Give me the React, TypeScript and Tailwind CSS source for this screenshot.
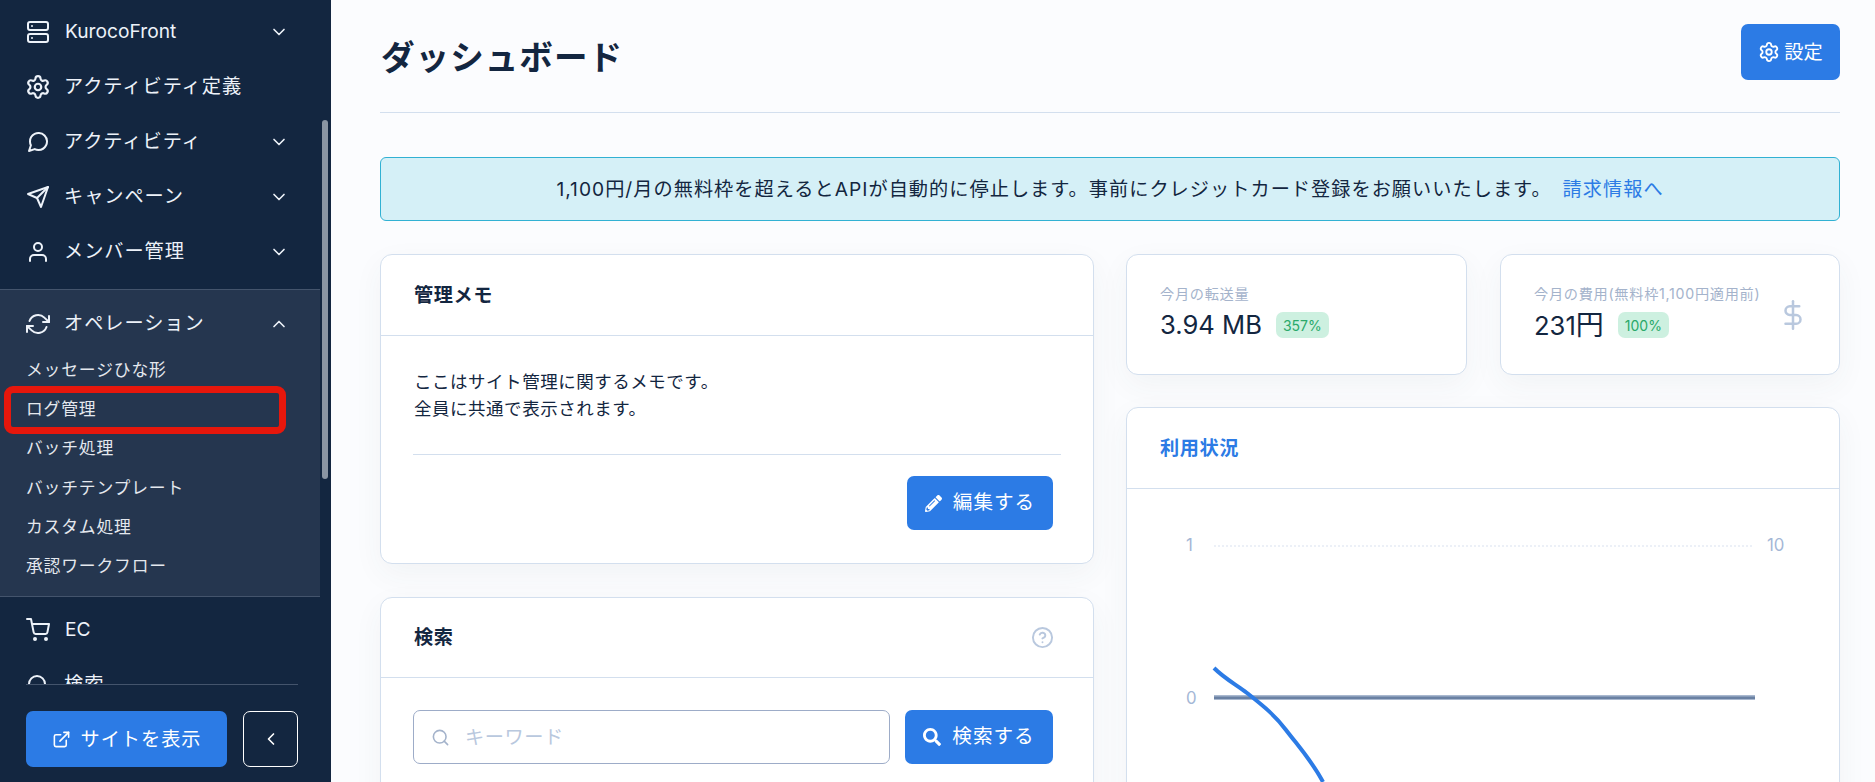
import React from 'react';
import {
  FiServer,
  FiMessageCircle,
  FiSend,
  FiUser,
  FiRefreshCw,
  FiShoppingCart,
  FiSearch,
  FiExternalLink,
  FiChevronDown,
  FiChevronUp,
  FiChevronLeft,
  FiHelpCircle,
  FiDollarSign,
} from 'react-icons/fi';
import { FaPencilAlt, FaSearch } from 'react-icons/fa';
import { Settings } from 'lucide-react';

const font = '[font-family:Inter,"Noto_Sans_CJK_JP",sans-serif]';

const NavRow = ({ icon, label, chevron, latin }: { icon: React.ReactNode; label: string; chevron?: 'down' | 'up'; latin?: boolean }) => (
  <div className="flex h-[55px] items-center pl-[26px] pr-[31px] text-[#edf2f9]">
    <span className="flex w-[39px] shrink-0 items-center text-[24px]">{icon}</span>
    <span className={`flex-1 text-[19.2px] ${latin ? 'tracking-normal' : '-ml-[1px] tracking-[0.05em]'}`}>{label}</span>
    {chevron === 'down' && <FiChevronDown className="text-[20px]" />}
    {chevron === 'up' && <FiChevronUp className="text-[20px]" />}
  </div>
);

const subItems = ['メッセージひな形', 'ログ管理', 'バッチ処理', 'バッチテンプレート', 'カスタム処理', '承認ワークフロー'];

const Sidebar = () => (
  <aside className="relative flex h-full w-[331px] shrink-0 flex-col bg-[#132640]">
    <div className="h-[684px] shrink-0 overflow-hidden pt-[4px]">
      <div className="w-[320px]">
        <NavRow icon={<FiServer />} label="KurocoFront" chevron="down" latin />
        <NavRow icon={<Settings size={26} strokeWidth={2} className="-ml-[1px]" />} label="アクティビティ定義" />
        <NavRow icon={<FiMessageCircle />} label="アクティビティ" chevron="down" />
        <NavRow icon={<FiSend />} label="キャンペーン" chevron="down" />
        <NavRow icon={<FiUser />} label="メンバー管理" chevron="down" />
        <div className="mt-[10px] border-y border-[#44546c] bg-[#25364f] pb-[10px] pt-[6px]">
          <NavRow icon={<FiRefreshCw />} label="オペレーション" chevron="up" />
          {subItems.map((item) => (
            <div key={item} className="flex h-[39.2px] items-center pl-[26px] text-[16.8px] tracking-[0.05em] text-[#e4e8ee]">
              {item}
            </div>
          ))}
        </div>
        <div className="mt-[5px]">
          <NavRow icon={<FiShoppingCart />} label="EC" latin />
          <NavRow icon={<FiSearch />} label="検索" />
        </div>
      </div>
    </div>
    <div className="ml-[26px] mr-[33px] flex gap-[16px] border-t border-[#44546c] pt-[26px]">
      <button className="flex h-[56px] w-[201px] shrink-0 items-center justify-center gap-[10px] rounded-[7px] bg-[#2c7be5] text-[19.2px] tracking-[0.05em] text-white">
        <FiExternalLink className="text-[19px]" />
        サイトを表示
      </button>
      <button className="flex h-[56px] w-[55px] shrink-0 items-center justify-center rounded-[7px] border border-white text-white">
        <FiChevronLeft className="text-[20px]" />
      </button>
    </div>
    {/* scrollbar */}
    <div className="absolute left-[322px] top-[120px] h-[359px] w-[6px] rounded-full bg-[#8a95a3]" />
    {/* annotation */}
    <div className="absolute left-[4px] top-[386px] h-[48px] w-[282px] rounded-[9px] border-[7px] border-[#e6170c]" />
  </aside>
);

const cardClass = 'rounded-[12px] border border-[#d3dfee] bg-white shadow-[0_10px_30px_rgba(65,69,88,0.05)]';

const BlueButton = ({ icon, label }: { icon: React.ReactNode; label: string }) => (
  <button className="flex h-[54px] w-full items-center justify-center gap-[11px] rounded-[7px] bg-[#2c7be5] text-[19.6px] tracking-[0.05em] text-white">
    {icon}
    {label}
  </button>
);

const Stat = ({ label, value, pct, extra }: { label: string; value: React.ReactNode; pct: string; extra?: React.ReactNode }) => (
  <div className={`${cardClass} flex h-[121px] items-center justify-between pl-[33px] pr-[31px]`}>
    <div className="-mt-[1px]">
      <div className="text-[14.2px] leading-[20px] tracking-[0.05em] text-[#a4b3cb]">{label}</div>
      <div className="mt-[2px] flex items-center gap-[14px]">
        <span className="text-[25.6px] leading-[38px] text-[#132640]">{value}</span>
        <span className="flex h-[26px] items-center rounded-[7px] bg-[#cdf0e0] px-[7px] text-[14px] text-[#2aa96a]">{pct}</span>
      </div>
    </div>
    {extra}
  </div>
);

const UsageChart = () => (
  <svg width="712" height="400" viewBox="0 0 712 400" className="block">
    <g fill="#a4b7d6" fontSize="16.8">
      <text x="59" y="62">1</text>
      <text x="59" y="215">0</text>
      <text x="640" y="62">10</text>
    </g>
    <line x1="87" y1="57" x2="627" y2="57" stroke="#e6ecf5" strokeWidth="1.5" strokeDasharray="2 2" />
    <rect x="87" y="206" width="541" height="5" fill="#a9b8cf" />
    <rect x="87" y="207.500" width="541" height="2.500" fill="#6a81a3" />
    <path d="M87 179 C98 190 110 196 120 204 C135 216 148 226 159 241 C172 258 185 272 196 293" fill="none" stroke="#2c7be5" strokeWidth="4" />
  </svg>
);

const App = () => (
  <div className={`${font} flex h-screen w-full overflow-hidden bg-[#fbfcfe] text-[#132640]`}>
    <Sidebar />
    <main className="min-w-0 flex-1 pl-[49px] pr-[35px]">
      <div className="flex h-[113px] items-start justify-between border-b border-[#d3dfee] pt-[24px]">
        <h1 className="mt-[9px] pl-[1px] text-[33.6px] font-bold leading-[50px] tracking-[0.03em]">ダッシュボード</h1>
        <button className="flex h-[56px] w-[99px] items-center justify-center gap-[4px] rounded-[7px] bg-[#2c7be5] text-[19.2px] text-white">
          <Settings size={22} strokeWidth={2} />
          設定
        </button>
      </div>

      <div className="mt-[44px] flex h-[64px] items-center justify-center rounded-[6px] border border-[#31b1d3] bg-[#d5f0f7] text-[19.2px] tracking-[0.053em]">
        <span>1,100円/月の無料枠を超えるとAPIが自動的に停止します。事前にクレジットカード登録をお願いいたします。</span>
        <span className="ml-[11px] text-[#2c7be5]">請求情報へ</span>
      </div>

      <div className="mt-[33px] grid grid-cols-[714px_714px] gap-x-[32px]">
        <div className="flex flex-col gap-[33px]">
          <section className={`${cardClass} h-[310px]`}>
            <h2 className="flex h-[81px] items-center border-b border-[#d3dfee] px-[33px] text-[19.2px] font-bold tracking-[0.03em]">管理メモ</h2>
            <div className="px-[32px]">
              <div className="h-[93px] pl-[1px] pt-[32px] text-[17.5px] leading-[27px] tracking-[0.03em]">
                ここはサイト管理に関するメモです。
                <br />
                全員に共通で表示されます。
              </div>
              <div className="mt-[25px] flex justify-end border-t border-[#d3dfee] pr-[8px] pt-[21px]">
                <div className="w-[146px]">
                  <BlueButton icon={<FaPencilAlt className="text-[17px]" />} label="編集する" />
                </div>
              </div>
            </div>
          </section>
          <section className={`${cardClass} h-[400px]`}>
            <div className="flex h-[80px] items-center justify-between border-b border-[#d3dfee] pl-[33px] pr-[39px]">
              <h2 className="text-[19.2px] font-bold tracking-[0.03em]">検索</h2>
              <FiHelpCircle className="text-[23px] text-[#b9c8de]" />
            </div>
            <div className="flex gap-[15px] pl-[32px] pr-[40px] pt-[32px]">
              <div className="flex h-[54px] flex-1 items-center gap-[15px] rounded-[7px] border border-[#9dacc8] px-[17px] text-[19.2px] tracking-[0.03em] text-[#b9c8de]">
                <FiSearch className="text-[19px] text-[#a4b3cb]" />
                キーワード
              </div>
              <div className="w-[148px]">
                <BlueButton icon={<FaSearch className="text-[18px]" />} label="検索する" />
              </div>
            </div>
          </section>
        </div>

        <div className="flex flex-col gap-[32px]">
          <div className="grid grid-cols-[341px_340px] gap-x-[33px]">
            <Stat label="今月の転送量" value="3.94 MB" pct="357%" />
            <Stat
              label="今月の費用(無料枠1,100円適用前)"
              value={
                <>
                  231<span className="text-[28px]">円</span>
                </>
              }
              pct="100%"
              extra={<FiDollarSign className="text-[30px] text-[#b9c8de]" />}
            />
          </div>
          <section className={cardClass}>
            <h2 className="flex h-[81px] items-center border-b border-[#d3dfee] px-[33px] text-[19.2px] font-bold tracking-[0.03em] text-[#2c7be5]">利用状況</h2>
            <UsageChart />
          </section>
        </div>
      </div>
    </main>
  </div>
);

export default App;
